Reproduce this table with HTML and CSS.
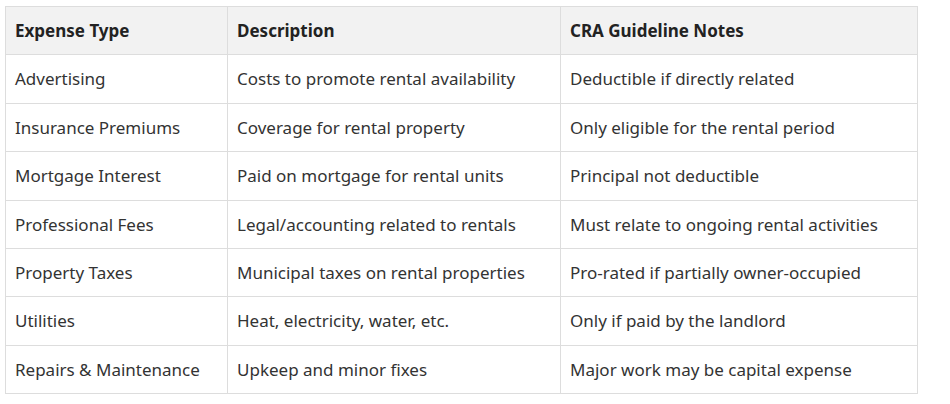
FILE: index.html
```html
<!DOCTYPE html>
<html lang="en">
<head>
<meta charset="utf-8">
<title>Rental expenses</title>
<link rel="stylesheet" href="styles.css">
</head>
<body>
<div class="wrap">
<table class="expenses">
  <colgroup>
    <col class="c1"><col class="c2"><col class="c3">
  </colgroup>
  <thead>
    <tr><th>Expense Type</th><th>Description</th><th>CRA Guideline Notes</th></tr>
  </thead>
  <tbody>
    <tr><td>Advertising</td><td>Costs to promote rental availability</td><td>Deductible if directly related</td></tr>
    <tr><td>Insurance Premiums</td><td>Coverage for rental property</td><td>Only eligible for the rental period</td></tr>
    <tr><td>Mortgage Interest</td><td>Paid on mortgage for rental units</td><td>Principal not deductible</td></tr>
    <tr><td>Professional Fees</td><td>Legal/accounting related to rentals</td><td>Must relate to ongoing rental activities</td></tr>
    <tr><td>Property Taxes</td><td>Municipal taxes on rental properties</td><td>Pro-rated if partially owner-occupied</td></tr>
    <tr><td>Utilities</td><td>Heat, electricity, water, etc.</td><td>Only if paid by the landlord</td></tr>
    <tr><td>Repairs &amp; Maintenance</td><td>Upkeep and minor fixes</td><td>Major work may be capital expense</td></tr>
  </tbody>
</table>
</div>
</body>
</html>
```
FILE: styles.css
```css
html, body {
  margin: 0;
  background: #ffffff;
}
.wrap {
  padding: 6px 0 0 5px;
}
.expenses {
  border-collapse: collapse;
  width: 912px;
  table-layout: fixed;
  font-family: "Noto Sans", "Open Sans", sans-serif;
  font-size: 17px;
  color: #333333;
}
.c1 { width: 222px; }
.c2 { width: 333px; }
.c3 { width: 357px; }
.expenses th,
.expenses td {
  border: 1px solid #dddddd;
  padding: 12px 9px;
  line-height: 23.4px;
  text-align: left;
  vertical-align: middle;
  white-space: nowrap;
}
.expenses th {
  background: #f2f2f2;
  font-weight: 700;
  color: #222222;
}
```
